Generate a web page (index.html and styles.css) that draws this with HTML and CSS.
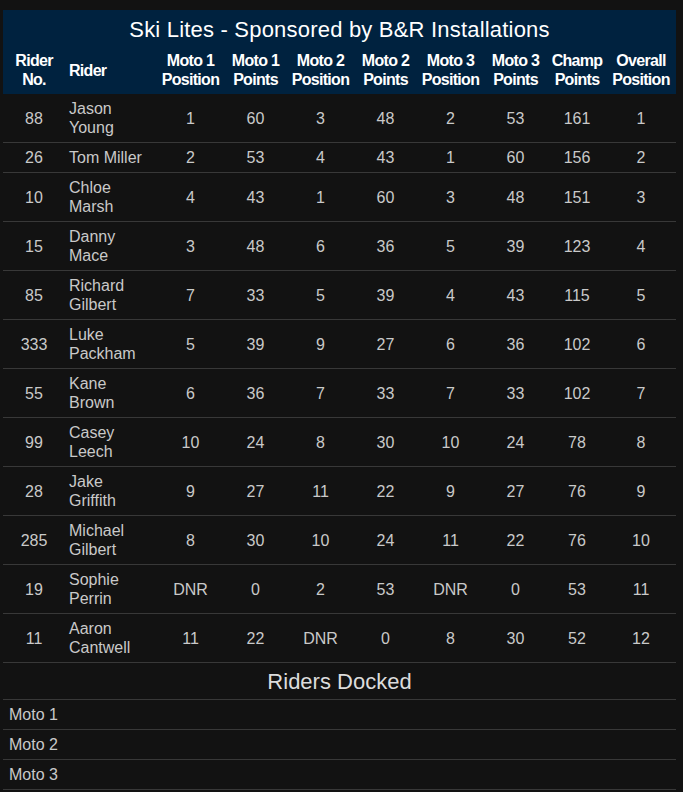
FILE: index.html
```html
<!DOCTYPE html>
<html>
<head>
<meta charset="utf-8">
<link rel="stylesheet" href="styles.css">
</head>
<body>
<div class="wrap">
<table class="results">
  <colgroup>
    <col class="c-no"><col class="c-name"><col class="c-m"><col class="c-m"><col class="c-m"><col class="c-m"><col class="c-m"><col class="c-m"><col class="c-champ"><col class="c-overall">
  </colgroup>
  <thead>
    <tr><th colspan="10" class="title">Ski Lites - Sponsored by B&amp;R Installations</th></tr>
    <tr class="labels">
      <th>Rider<br>No.</th><th class="left">Rider</th><th>Moto 1<br>Position</th><th>Moto 1<br>Points</th><th>Moto 2<br>Position</th><th>Moto 2<br>Points</th><th>Moto 3<br>Position</th><th>Moto 3<br>Points</th><th>Champ<br>Points</th><th>Overall<br>Position</th>
    </tr>
  </thead>
  <tbody>
    <tr><td>88</td><td class="left">Jason<br>Young</td><td>1</td><td>60</td><td>3</td><td>48</td><td>2</td><td>53</td><td>161</td><td>1</td></tr>
    <tr><td>26</td><td class="left">Tom Miller</td><td>2</td><td>53</td><td>4</td><td>43</td><td>1</td><td>60</td><td>156</td><td>2</td></tr>
    <tr><td>10</td><td class="left">Chloe<br>Marsh</td><td>4</td><td>43</td><td>1</td><td>60</td><td>3</td><td>48</td><td>151</td><td>3</td></tr>
    <tr><td>15</td><td class="left">Danny<br>Mace</td><td>3</td><td>48</td><td>6</td><td>36</td><td>5</td><td>39</td><td>123</td><td>4</td></tr>
    <tr><td>85</td><td class="left">Richard<br>Gilbert</td><td>7</td><td>33</td><td>5</td><td>39</td><td>4</td><td>43</td><td>115</td><td>5</td></tr>
    <tr><td>333</td><td class="left">Luke<br>Packham</td><td>5</td><td>39</td><td>9</td><td>27</td><td>6</td><td>36</td><td>102</td><td>6</td></tr>
    <tr><td>55</td><td class="left">Kane<br>Brown</td><td>6</td><td>36</td><td>7</td><td>33</td><td>7</td><td>33</td><td>102</td><td>7</td></tr>
    <tr><td>99</td><td class="left">Casey<br>Leech</td><td>10</td><td>24</td><td>8</td><td>30</td><td>10</td><td>24</td><td>78</td><td>8</td></tr>
    <tr><td>28</td><td class="left">Jake<br>Griffith</td><td>9</td><td>27</td><td>11</td><td>22</td><td>9</td><td>27</td><td>76</td><td>9</td></tr>
    <tr><td>285</td><td class="left">Michael<br>Gilbert</td><td>8</td><td>30</td><td>10</td><td>24</td><td>11</td><td>22</td><td>76</td><td>10</td></tr>
    <tr><td>19</td><td class="left">Sophie<br>Perrin</td><td>DNR</td><td>0</td><td>2</td><td>53</td><td>DNR</td><td>0</td><td>53</td><td>11</td></tr>
    <tr><td>11</td><td class="left">Aaron<br>Cantwell</td><td>11</td><td>22</td><td>DNR</td><td>0</td><td>8</td><td>30</td><td>52</td><td>12</td></tr>
  </tbody>
</table>
<div class="docked">
  <div class="docked-title">Riders Docked</div>
  <div class="docked-row">Moto 1</div>
  <div class="docked-row">Moto 2</div>
  <div class="docked-row">Moto 3</div>
</div>
</div>
</body>
</html>
```
FILE: styles.css
```css
html, body {
  margin: 0;
  padding: 0;
  background: #121212;
}
body {
  font-family: "Liberation Sans", Arial, sans-serif;
  color: #c9c9c9;
}
.wrap {
  width: 673px;
  padding: 10px 0 0 3px;
}
.results {
  width: 673px;
  border-collapse: collapse;
  table-layout: fixed;
}
.c-no { width: 62px; }
.c-name { width: 93px; }
.c-m { width: 65px; }
.c-champ { width: 58px; }
.c-overall { width: 70px; }
thead {
  background: #00223f;
  color: #ffffff;
}
.title {
  font-size: 22px;
  font-weight: normal;
  letter-spacing: 0.2px;
  line-height: 25px;
  padding: 7px 0 4px;
  text-align: center;
}
.labels th {
  font-size: 16px;
  font-weight: bold;
  letter-spacing: -0.7px;
  line-height: 19px;
  padding: 5px 0 5px;
  text-align: center;
  vertical-align: middle;
}
.labels th.left {
  text-align: left;
  padding-left: 4px;
}
tbody td {
  font-size: 16px;
  line-height: 19px;
  padding: 5px 0;
  text-align: center;
  vertical-align: middle;
  border-bottom: 1px solid #383838;
}
tbody td.left {
  text-align: left;
  padding-left: 4px;
}
.docked-title {
  font-size: 22px;
  line-height: 25px;
  padding: 6px 0 5px;
  text-align: center;
  color: #dcdcdc;
  border-bottom: 1px solid #383838;
}
.docked-row {
  font-size: 16px;
  line-height: 19px;
  padding: 5px 6px;
  border-bottom: 1px solid #383838;
}
```
